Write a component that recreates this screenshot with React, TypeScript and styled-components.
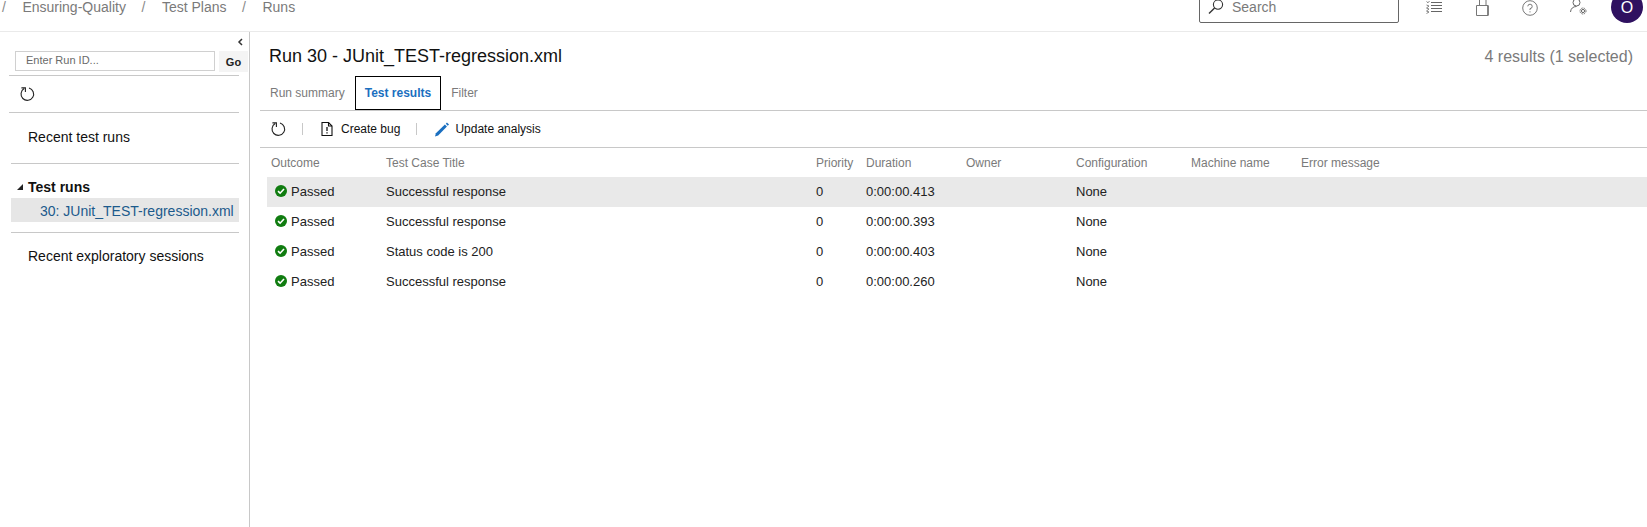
import React from 'react';
import styled, { createGlobalStyle } from 'styled-components';

const Global = createGlobalStyle`
  html, body { margin: 0; padding: 0; height: 100%; overflow: hidden; background: #fff; }
  body { font-family: "Liberation Sans", Arial, sans-serif; color: #222; }
  #root { height: 100%; }
`;

const Page = styled.div`
  width: 1647px;
  height: 527px;
  display: flex;
  flex-direction: column;
  overflow: hidden;
`;

const TopBar = styled.header`
  flex: 0 0 32px;
  box-sizing: border-box;
  height: 32px;
  border-bottom: 1px solid #eaeaea;
  display: flex;
  align-items: flex-end;
  padding: 0 4px 8px 2px;
  overflow: hidden;
`;

const Crumbs = styled.nav`
  display: flex;
  align-items: center;
  font-size: 14px;
  line-height: 16px;
  color: #7a7a7a;
  margin-bottom: 8px;
  flex: 1;
`;

const Crumb = styled.span`
  margin-right: 15.6px;
`;

const Slash = styled.span`
  margin-right: 16.5px;
  color: #8a8a8a;
`;

const SearchBox = styled.div`
  box-sizing: border-box;
  width: 200px;
  height: 40px;
  border: 1px solid #666;
  border-radius: 2px;
  display: flex;
  align-items: flex-end;
  padding: 0 0 7px 8px;
  gap: 8px;
  font-size: 14px;
  line-height: 16px;
  color: #7a7a7a;
  margin-right: 11px;
`;

const TopIcons = styled.div`
  display: flex;
  align-items: center;
  margin-bottom: 7px;
`;

const TopIconSlot = styled.span`
  width: 48px;
  display: flex;
  justify-content: center;
`;

const Avatar = styled.div`
  box-sizing: border-box;
  width: 32px;
  height: 32px;
  border-radius: 50%;
  background: #2f1160;
  color: #fff;
  font-size: 16px;
  line-height: 14px;
  padding-top: 10px;
  text-align: center;
  margin-left: 9px;
  flex: none;
`;

const Body = styled.div`
  flex: 1;
  display: flex;
  min-height: 0;
`;

const Side = styled.aside`
  flex: 0 0 250px;
  box-sizing: border-box;
  width: 250px;
  border-right: 1px solid #c8c8c8;
  padding: 0 10px 0 9px;
  position: relative;
`;

const Collapse = styled.button`
  position: absolute;
  top: 5px;
  left: 237px;
  width: 7px;
  height: 10px;
  border: 0;
  padding: 0;
  background: none;
  display: flex;
`;

const RunIdRow = styled.div`
  display: flex;
  margin: 19px -9px 0 6px;
  gap: 4px;
  height: 24px;
`;

const RunInput = styled.div`
  box-sizing: border-box;
  width: 200px;
  height: 20px;
  border: 1px solid #d0d0d0;
  font-size: 11px;
  line-height: 16px;
  color: #6a6a6a;
  padding-left: 10px;
`;

const GoButton = styled.div`
  width: 29px;
  height: 21px;
  background: #f4f4f4;
  font-size: 11px;
  font-weight: 700;
  color: #222;
  line-height: 22px;
  text-align: center;
`;

const Rule = styled.hr<{ $inset?: boolean }>`
  border: 0;
  border-top: 1px solid #c8c8c8;
  margin: 0 0 0 ${p => (p.$inset ? 2 : 0)}px;
`;

const SideTools = styled.div`
  height: 36px;
  display: flex;
  align-items: center;
  padding-left: 10px;
`;

const SideHead = styled.div<{ $lift?: number }>`
  box-sizing: border-box;
  height: 50px;
  display: flex;
  align-items: center;
  padding-left: 19px;
  padding-bottom: ${p => p.$lift ?? 2}px;
  font-size: 14px;
  color: #111;
`;

const Group = styled.div`
  display: flex;
  align-items: center;
  height: 23px;
  margin-top: 11px;
  padding-left: 8px;
  font-size: 14px;
  font-weight: 700;
  color: #111;
  gap: 5px;
`;

const TreeRow = styled.div`
  margin: 0 0 10px 2px;
  height: 24px;
  line-height: 26px;
  background: #e6e6e6;
  padding-left: 29px;
  font-size: 14px;
  color: #1c5a8c;
`;

const Main = styled.main`
  flex: 1;
  min-width: 0;
  padding-left: 10px;
`;

const TitleRow = styled.div`
  display: flex;
  align-items: center;
  justify-content: space-between;
  height: 44px;
  padding: 5px 14px 0 9px;
  box-sizing: border-box;
`;

const Title = styled.h1`
  margin: 0;
  font-size: 18px;
  font-weight: 400;
  color: #111;
`;

const Count = styled.span`
  font-size: 16px;
  color: #7a7a7a;
`;

const Tabs = styled.div`
  display: flex;
  height: 34px;
  border-bottom: 1px solid #c8c8c8;
  padding-left: 10px;
  font-size: 12px;
`;

const Tab = styled.div<{ $active?: boolean }>`
  box-sizing: border-box;
  height: 34px;
  line-height: 32px;
  padding: 0 9px;
  color: ${p => (p.$active ? '#1a6fc0' : '#7a7a7a')};
  font-weight: ${p => (p.$active ? 700 : 400)};
  border: 1px solid ${p => (p.$active ? '#000' : 'transparent')};
  &:first-child { padding: 0 9px 0 0; border-left: 0; }
`;

const Toolbar = styled.div`
  display: flex;
  align-items: center;
  height: 37px;
  box-sizing: border-box;
  border-bottom: 1px solid #c8c8c8;
  padding-left: 10px;
  font-size: 12px;
  color: #111;
`;

const Sep = styled.span`
  width: 1px;
  height: 12px;
  background: #c8c8c8;
  margin: 0 18px 0 16px;
`;

const Action = styled.span<{ $gap: number }>`
  display: flex;
  align-items: center;
  gap: ${p => p.$gap}px;
  line-height: 16px;
`;

const cols = '115px 430px 50px 100px 110px 115px 110px 1fr';

const HeaderRow = styled.div`
  display: grid;
  grid-template-columns: ${cols};
  margin-left: 7px;
  height: 29px;
  align-items: center;
  font-size: 12px;
  color: #7a7a7a;
`;

const HeadCell = styled.div`
  padding-left: 4px;
  white-space: nowrap;
`;

const Row = styled.div<{ $selected?: boolean }>`
  display: grid;
  grid-template-columns: ${cols};
  box-sizing: border-box;
  margin-left: 7px;
  height: 30px;
  padding-bottom: 2px;
  align-items: center;
  font-size: 13px;
  color: #222;
  background: ${p => (p.$selected ? '#e9e9e9' : 'transparent')};
`;

const Cell = styled.div`
  padding-left: 4px;
  white-space: nowrap;
`;

const Outcome = styled(Cell)`
  display: flex;
  align-items: center;
  gap: 4px;
  padding-left: 8px;
`;

const RefreshIcon = () => (
  <svg width="16" height="16" viewBox="0 0 16 16" fill="none" stroke="#222" strokeWidth="1.1">
    <path d="M10 2A6.3 6.3 0 1 1 5.2 2.6" />
    <path d="M2.4 1.9H6.4V6" />
  </svg>
);

const CheckIcon = () => (
  <svg width="12" height="12" viewBox="0 0 12 12">
    <circle cx="6" cy="6" r="6" fill="#107c10" />
    <path d="M3 6.2 5.1 8.2 9 4" fill="none" stroke="#fff" strokeWidth="1.6" />
  </svg>
);

const BugIcon = () => (
  <svg width="12" height="14" viewBox="0 0 12 14" fill="none" stroke="#111" strokeWidth="1.1">
    <path d="M1 .5H7.5L11 4V13.5H1Z" />
    <path d="M7.5 .5V4H11" />
    <path d="M6 5V9M6 10.2V11.6" strokeWidth="1.3" />
  </svg>
);

const PencilIcon = () => (
  <svg width="14" height="15" viewBox="0 0 15 15">
    <path d="M0 15 1 11.4 10.6 2.2 12.8 4.4 3.4 14Z" fill="#1a6fc0" />
    <path d="M11.6 1.4 12.8 0 15 2.2 13.7 3.5Z" fill="#1a6fc0" />
  </svg>
);

const SearchIcon = () => (
  <svg width="16" height="16" viewBox="0 0 16 16" fill="none" stroke="#333" strokeWidth="1.1">
    <circle cx="10" cy="5.6" r="4.6" />
    <path d="M6.6 9 1 14.6" strokeWidth="1.4" />
  </svg>
);

const ListIcon = () => (
  <svg width="16" height="13" viewBox="0 0 16 13" fill="none" stroke="#666" strokeWidth="1">
    <path d="M5 1.5H16M5 4.5H16M5 7.5H16M5 10.5H16" />
    <path d="M.5 .5 2 1.8 3.5 0M.5 4 3 5 .5 7 3 8 .5 10 3 11 .5 12.5" strokeWidth=".8" />
  </svg>
);

const BagIcon = () => (
  <svg width="14" height="17" viewBox="0 0 14 17" fill="none" stroke="#777" strokeWidth="1">
    <path d="M1.5 6.5H13V16.5H1.5Z" />
    <path d="M4.5 6V0M11 6V0" />
    <path d="M13 6.5V16.5" strokeWidth="1.6" />
  </svg>
);

const HelpIcon = () => (
  <svg width="16" height="16" viewBox="0 0 16 16" fill="none" stroke="#777" strokeWidth="1">
    <circle cx="8" cy="8" r="7.3" />
    <path d="M5.8 6.3A2.2 2.2 0 1 1 8 8.6V10M8 11.3V12.4" />
  </svg>
);

const UserGearIcon = () => (
  <svg width="17" height="17" viewBox="0 0 17 17" fill="none" stroke="#666" strokeWidth="1">
    <circle cx="6.5" cy="3.5" r="3.5" />
    <path d="M.5 13C.8 9.5 3 7.5 6.5 7.5" />
    <circle cx="13" cy="12" r="1.6" />
    <circle cx="13" cy="12" r="3" strokeDasharray="1.4 1" />
  </svg>
);

const ChevronIcon = () => (
  <svg width="7" height="10" viewBox="0 0 7 10" fill="none" stroke="#333" strokeWidth="1.5">
    <path d="M5 2 2 5 5 8" />
  </svg>
);

const Caret = () => (
  <svg width="6" height="6" viewBox="0 0 6 6">
    <path d="M6 0V6H0Z" fill="#222" />
  </svg>
);

const results = [
  { title: 'Successful response', duration: '0:00:00.413', selected: true },
  { title: 'Successful response', duration: '0:00:00.393' },
  { title: 'Status code is 200', duration: '0:00:00.403' },
  { title: 'Successful response', duration: '0:00:00.260' },
];

const headers = ['Outcome', 'Test Case Title', 'Priority', 'Duration', 'Owner', 'Configuration', 'Machine name', 'Error message'];

export default function App() {
  return (
    <Page>
      <Global />
      <TopBar>
        <Crumbs>
          <Slash>/</Slash>
          <Crumb>Ensuring-Quality</Crumb>
          <Slash>/</Slash>
          <Crumb>Test Plans</Crumb>
          <Slash>/</Slash>
          <Crumb>Runs</Crumb>
        </Crumbs>
        <SearchBox>
          <SearchIcon />
          Search
        </SearchBox>
        <TopIcons>
          <TopIconSlot><ListIcon /></TopIconSlot>
          <TopIconSlot><BagIcon /></TopIconSlot>
          <TopIconSlot><HelpIcon /></TopIconSlot>
          <TopIconSlot><UserGearIcon /></TopIconSlot>
        </TopIcons>
        <Avatar>O</Avatar>
      </TopBar>
      <Body>
        <Side>
          <Collapse><ChevronIcon /></Collapse>
          <RunIdRow>
            <RunInput>Enter Run ID...</RunInput>
            <GoButton>Go</GoButton>
          </RunIdRow>
          <Rule />
          <SideTools><RefreshIcon /></SideTools>
          <Rule />
          <SideHead>Recent test runs</SideHead>
          <Rule $inset />
          <Group><Caret />Test runs</Group>
          <TreeRow>30: JUnit_TEST-regression.xml</TreeRow>
          <Rule $inset />
          <SideHead $lift={4}>Recent exploratory sessions</SideHead>
        </Side>
        <Main>
          <TitleRow>
            <Title>Run 30 - JUnit_TEST-regression.xml</Title>
            <Count>4 results (1 selected)</Count>
          </TitleRow>
          <Tabs>
            <Tab>Run summary</Tab>
            <Tab $active>Test results</Tab>
            <Tab>Filter</Tab>
          </Tabs>
          <Toolbar>
            <RefreshIcon />
            <Sep />
            <Action $gap={8}><BugIcon />Create bug</Action>
            <Sep />
            <Action $gap={6}><PencilIcon />Update analysis</Action>
          </Toolbar>
          <HeaderRow>
            {headers.map(h => <HeadCell key={h}>{h}</HeadCell>)}
          </HeaderRow>
          {results.map((r, i) => (
            <Row key={i} $selected={r.selected}>
              <Outcome><CheckIcon />Passed</Outcome>
              <Cell>{r.title}</Cell>
              <Cell>0</Cell>
              <Cell>{r.duration}</Cell>
              <Cell />
              <Cell>None</Cell>
              <Cell />
              <Cell />
            </Row>
          ))}
        </Main>
      </Body>
    </Page>
  );
}
